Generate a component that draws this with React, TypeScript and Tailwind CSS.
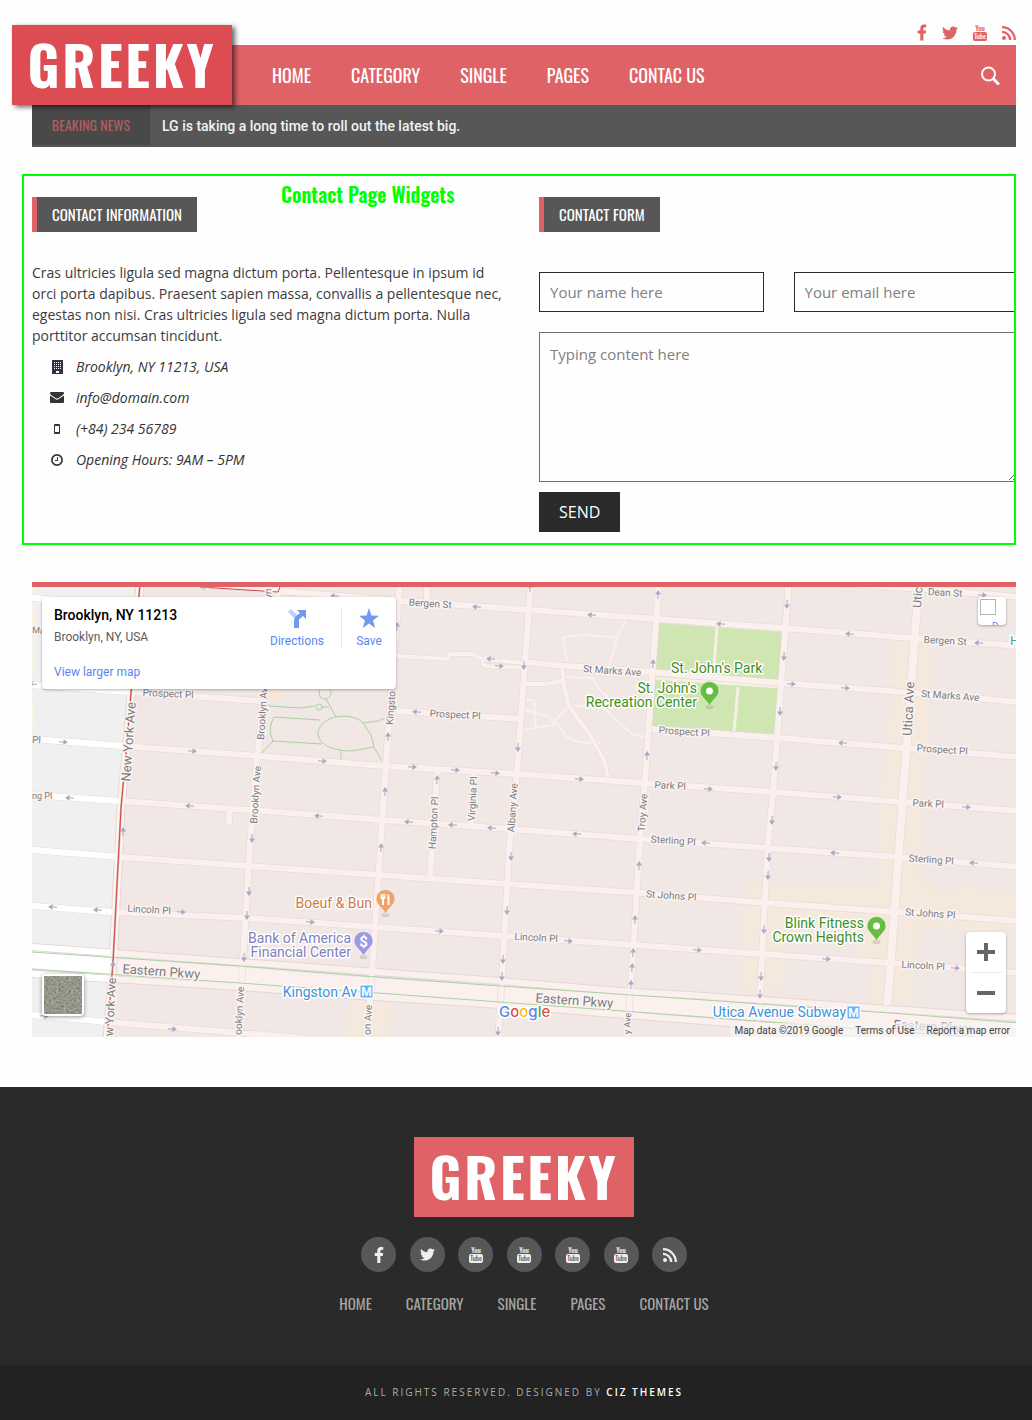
import React from 'react';
import { FaFacebookF, FaTwitter } from 'react-icons/fa';

const DISPLAY = "font-['Oswald','Liberation_Sans_Narrow',sans-serif]";

function YouTubeIcon({ knock }: { knock: string }) {
  return (
    <svg width="14" height="17" viewBox="0 0 14 17" aria-hidden="true">
      <text x="7" y="7" textAnchor="middle" fontSize="7" fontWeight="500" fontFamily="Oswald, sans-serif" fill="currentColor">You</text>
      <rect x="0" y="8" width="14" height="9" rx="2" fill="currentColor" />
      <text x="7" y="15" textAnchor="middle" fontSize="7" fontFamily="Oswald, sans-serif" fill={knock}>Tube</text>
    </svg>
  );
}

function RssIcon() {
  return (
    <svg width="14" height="14" viewBox="0 0 14 14" aria-hidden="true">
      <circle cx="2" cy="12" r="2" fill="currentColor" />
      <path d="M0 5.800A8.200 8.200 0 0 1 8.200 14M0 1.200A12.800 12.800 0 0 1 12.800 14" fill="none" stroke="currentColor" strokeWidth="2.300" />
    </svg>
  );
}

function BuildingIcon() {
  return (
    <svg width="11" height="14" viewBox="0 0 11 14" aria-hidden="true">
      <rect width="11" height="14" fill="#3b2c45" />
      {[2, 4, 6, 8].map((y) =>
        [2, 4, 6, 8].map((x) => <rect key={`${x}-${y}`} x={x} y={y} width="1" height="1" fill="#fff" />),
      )}
      <rect x="4" y="11" width="3" height="2" fill="#fff" />
    </svg>
  );
}

function EnvelopeIcon() {
  return (
    <svg width="14" height="11" viewBox="0 0 14 11" fill="#333" aria-hidden="true">
      <path d="M1 0H13Q14 0 14 1Q14 2.200 12.800 3L8.200 6.200Q7 7 5.800 6.200L1.200 3Q0 2.200 0 1Q0 0 1 0z" />
      <path d="M0 3.400L5.300 7.100Q7 8.200 8.700 7.100L14 3.400V10Q14 11 13 11H1Q0 11 0 10z" />
    </svg>
  );
}

function PhoneIcon() {
  return (
    <svg width="6" height="10" viewBox="0 0 6 10" aria-hidden="true">
      <rect width="6" height="10" rx="1" fill="#333" />
      <rect x="1" y="2" width="4" height="6" fill="#fefefe" />
    </svg>
  );
}

function ClockIcon() {
  return (
    <svg width="12" height="12" viewBox="0 0 12 12" fill="none" stroke="#333" aria-hidden="true">
      <circle cx="6" cy="6" r="5.100" strokeWidth="1.700" />
      <path d="M6.500 3V6.500H4" strokeWidth="1" />
    </svg>
  );
}

const NAV = ['HOME', 'CATEGORY', 'SINGLE', 'PAGES', 'CONTAC US'];
const FOOTER_NAV = ['HOME', 'CATEGORY', 'SINGLE', 'PAGES', 'CONTACT US'];

function Header() {
  return (
    <header className="ml-8 mr-4">
      <div className="flex h-[45px] items-center justify-end gap-[15px] pt-5 text-[#df6366]">
        <a href="#" aria-label="Facebook"><FaFacebookF className="h-[17px] w-[10px]" /></a>
        <a href="#" aria-label="Twitter"><FaTwitter size={16} /></a>
        <a href="#" aria-label="YouTube"><YouTubeIcon knock="#fefefe" /></a>
        <a href="#" aria-label="RSS"><RssIcon /></a>
      </div>
      <div className="relative flex h-[60px] items-center justify-between bg-[#df6366] pl-60 pr-4">
        <a href="#" className={`absolute -left-5 -top-5 z-10 flex h-20 w-[220px] items-center justify-center bg-[#dc4c52] pb-1 text-[55px] font-bold tracking-wider text-white shadow-[3px_2px_5px_rgba(0,0,0,0.6)] ${DISPLAY}`}>GREEKY</a>
        <nav className="flex gap-10">
          {NAV.map((n) => (
            <a key={n} href="#" className={`whitespace-nowrap text-[18px] font-normal text-white ${DISPLAY}`}>{n}</a>
          ))}
        </nav>
        <button type="button" aria-label="Search">
          <svg width="19" height="20" viewBox="0 0 19 20" fill="none" stroke="#fff" aria-hidden="true">
            <circle cx="7.500" cy="9" r="6.500" strokeWidth="2" />
            <path d="M12 13.500l6 6" strokeWidth="3" />
          </svg>
        </button>
      </div>
      <div className="flex h-[42px] bg-[#575757]">
        <div className={`flex h-10 w-[118px] items-center justify-center bg-[#494949] text-[14px] leading-10 text-[#b25c5f] ${DISPLAY}`}>BEAKING NEWS</div>
        <p className="ml-3 flex items-center font-['Roboto',sans-serif] text-[14px] font-medium text-[#f2f2f2]">LG is taking a long time to roll out the latest big.</p>
      </div>
    </header>
  );
}

function Tag({ children }: { children: React.ReactNode }) {
  return (
    <h2 className={`inline-flex h-[35px] items-center whitespace-nowrap border-l-[5px] border-[#df6366] bg-[#575757] px-[15px] text-[15px] font-normal text-white ${DISPLAY}`}>{children}</h2>
  );
}

const DETAILS = [
  { icon: <BuildingIcon />, text: 'Brooklyn, NY 11213, USA' },
  { icon: <EnvelopeIcon />, text: 'info@domain.com' },
  { icon: <PhoneIcon />, text: '(+84) 234 56789' },
  { icon: <ClockIcon />, text: 'Opening Hours: 9AM – 5PM' },
];

function Contact() {
  return (
    <section className="relative ml-[22px] mr-4 mt-[27px] h-[371px] overflow-hidden border-2 border-[#0f0] pl-2 pt-[21px] font-['Open_Sans',sans-serif]">
      <div className={`absolute left-[257px] top-1 text-[20px] font-semibold leading-7 text-[#0f0] ${DISPLAY}`}>Contact Page Widgets</div>
      <div className="-mr-1 grid grid-cols-2 gap-x-7">
        <div>
          <Tag>CONTACT INFORMATION</Tag>
          <p className="mt-[30px] text-[14px] leading-[21px] text-[#3c3c3c]">Cras ultricies ligula sed magna dictum porta. Pellentesque in ipsum id orci porta dapibus. Praesent sapien massa, convallis a pellentesque nec, egestas non nisi. Cras ultricies ligula sed magna dictum porta. Nulla porttitor accumsan tincidunt.</p>
          <ul className="mt-[5px]">
            {DETAILS.map((d) => (
              <li key={d.text} className="flex h-[31px] items-center pl-[18px] text-[14px] italic text-[#333]">
                <span className="mr-3 flex w-[14px] justify-center">{d.icon}</span>
                {d.text}
              </li>
            ))}
          </ul>
        </div>
        <form onSubmit={(e) => e.preventDefault()}>
          <Tag>CONTACT FORM</Tag>
          <div className="mt-10 grid grid-cols-2 gap-x-[30px]">
            <input aria-label="Your name" placeholder="Your name here" className="h-10 w-full border border-[#2a2a2a] px-[10px] text-[15px] placeholder:text-[#808080]" />
            <input aria-label="Your email" placeholder="Your email here" className="h-10 w-full border border-[#2a2a2a] px-[10px] text-[15px] placeholder:text-[#808080]" />
          </div>
          <textarea aria-label="Message" placeholder="Typing content here" className="mt-5 block h-[150px] w-full border border-[#707070] p-[10px] text-[15px] placeholder:text-[#808080]" />
          <button type="submit" className="mt-[10px] h-10 bg-[#2a2a2a] px-5 text-[16px] text-white">SEND</button>
        </form>
      </div>
    </section>
  );
}

const STREETS = [
  'M205 584L280 591L401 601L530 610L657 619L783 628L910 638L1020 646',
  'M427 580L427 603',
  'M820 582L923 589L1020 597',
  'M32 598L140 606',
  'M32 685L130 692L260 701',
  'M397 711L520 719',
  'M652 729L780 738L903 748L1020 757',
  'M523 662L567 666L650 672L780 683L903 692L1020 702',
  'M32 739L123 746L258 756L383 766L517 774L643 783L773 792L903 802L1020 811',
  'M32 795L120 801L250 810L383 820L510 829L640 839L767 848L897 857L1020 867',
  'M32 850L120 857L248 866L380 875L507 884L640 893L767 903L897 912L1020 921',
  'M32 906L113 912L247 918L375 927L503 936L633 945L763 954L890 963L1020 973',
  'M32 1015L107 1022L303 1038',
  'M280 580L265 688L257 758L250 845L243 958L238 1040',
  'M400 580L388 735L383 808L372 972L367 1040',
  'M531 580L517 772L510 838L502 978L498 1040',
  'M437 770L430 877',
  'M474 771L471 826',
  'M659 580L645 780L640 838L633 952L627 1040',
  'M789 580L773 792L768 842L760 995L757 1040',
  'M229 808L229 824',
];
const LANES = [
  'M397 656L448 659L450 654L472 654L482 659L523 663',
  'M487 657Q479 661 485 666L527 668',
  'M522 684H546L562 681',
  'M562 668L564 687L569 706L590 735L604 760L608 777',
];
const FOOTPATHS = [
  'M568 665L563 638Q575 634 600 636L617 638L626 619M617 638L609 666',
  'M563 677L593 678L600 690L608 697L602 705L569 706L555 721L567 737Q578 744 600 743',
  'M524 700H534L536 728M524 710L548 716L555 725L522 730M600 705L632 734L645 737',
];
const PARKWAY = 'M32 960L240 976L350 985L627 1003L890 1021L1020 1031';
const SERVICE = ['M32 947L113 953L350 970L500 981L633 992L690 995L890 1009L1020 1018', 'M32 974L240 987L360 996L500 1005L690 1020L890 1035L1020 1044'];
const MEDIANS = ['M32 952L240 966L350 975L500 986L690 999L890 1013L1020 1023', 'M32 969L240 983L350 991L500 1002L690 1016L890 1031L1020 1040'];
const NEW_YORK_AVE = 'M140 584L127 742L121 808L113 962L107 1040';

type Label = [string, number, number, number, number?, ('start' | 'middle' | 'end')?];
const LABELS: Label[] = [
  ['Bergen St', 430, 607, 4], ['St Marks Ave', 612, 674, 4], ['Prospect Pl', 455, 718, 3], ['Prospect Pl', 684, 735, 4],
  ['Prospect Pl', 168, 697, 3], ['Prospect Pl', 942, 753, 4], ['Park Pl', 670, 789, 3], ['Park Pl', 928, 807, 3],
  ['Sterling Pl', 673, 844, 4], ['Sterling Pl', 931, 863, 4], ['St Johns Pl', 671, 899, 4], ['St Johns Pl', 930, 917, 4],
  ['Lincoln Pl', 149, 913, 3], ['Lincoln Pl', 536, 941, 3], ['Lincoln Pl', 923, 969, 3], ['Dean St', 945, 596, 3],
  ['Bergen St', 945, 644, 3], ['St Marks Ave', 950, 699, 4], ['Ma', 32, 633, 3, 9, 'start'], ['Pl', 32, 743, 3, 10, 'start'],
  ['ng Pl', 32, 799, 0, 9, 'start'],
  ['Eastern Pkwy', 161, 976, 4, 13], ['Eastern Pkwy', 574, 1005, 4, 13],
  ['New York Ave', 133, 742, -86, 13], ['w York Ave', 116, 978, -87, 12, 'end'], ['Brooklyn Av', 264, 740, -86, 10, 'start'],
  ['Brooklyn Ave', 259, 795, -86], ['ooklyn Ave', 244, 987, -87, 10, 'end'], ['yn', 271, 599, -86, 10, 'start'],
  ['Kingsto', 393, 725, -86, 10, 'start'], ['on Ave', 372, 1005, -87, 10, 'end'], ['Hampton Pl', 437, 823, -87],
  ['Virginia Pl', 476, 799, -87], ['Albany Ave', 516, 808, -86], ['Troy Ave', 646, 813, -86], ['y Ave', 631, 1013, -87, 9, 'end'],
  ['Utica Ave', 913, 709, -87, 13], ['Utic', 921, 608, -86, 12, 'start'], ['Eastern Pkwy', 932, 1031, 3, 13],
];

/* Heading in degrees: 0 points right, 90 down, 180 left, 270 up. */
const ARROWS: [number, number, number][] = [
  [205, 587, 184], [335, 596, 184], [477, 607, 184], [592, 615, 184], [721, 624, 184], [850, 634, 184], [979, 643, 184], [982, 595, 4],
  [491, 659, 184], [499, 666, 4], [791, 684, 4], [845, 688, 4], [417, 712, 184], [843, 743, 184], [63, 742, 4], [192, 751, 4], [322, 761, 4],
  [412, 767, 4], [455, 770, 4], [495, 773, 4], [579, 779, 4], [708, 789, 4], [837, 797, 4], [966, 807, 4],
  [70, 798, 184], [190, 806, 184], [319, 816, 184], [409, 822, 184], [453, 825, 184], [492, 828, 184], [577, 834, 184], [706, 843, 184],
  [835, 853, 184], [974, 863, 184], [53, 907, 184], [98, 910, 184], [181, 912, 4], [310, 922, 4], [439, 931, 4], [568, 941, 4],
  [697, 950, 4], [826, 959, 4], [955, 968, 4], [172, 1029, 4], [44, 1016, 4], [33, 684, 184],
  [252, 838, 92], [249, 891, 92], [247, 915, 92], [244, 957, 92], [388, 737, 272], [385, 792, 272], [381, 848, 272], [397, 627, 272],
  [437, 780, 272], [524, 665, 92], [518, 747, 92], [511, 856, 92], [507, 910, 92], [503, 959, 92], [502, 976, 92], [498, 1031, 92],
  [658, 595, 272], [653, 664, 272], [647, 756, 272], [639, 866, 272], [635, 920, 272], [633, 953, 272], [632, 968, 272], [631, 985, 272],
  [787, 604, 92], [784, 656, 92], [780, 711, 92], [776, 766, 92], [772, 820, 92], [769, 857, 92], [768, 875, 92], [764, 929, 92],
  [761, 976, 92], [760, 994, 92], [123, 832, 272], [113, 966, 272], [530, 588, 272],
];

function Pin({ x, y, color, children }: { x: number; y: number; color: string; children: React.ReactNode }) {
  return (
    <g transform={`translate(${x} ${y})`}>
      <ellipse cx="0" cy="16" rx="4" ry="2" fill="#000" opacity="0.12" />
      <path d="M0 16C-1 10-9.500 6-9.500 0A9.500 9.500 0 0 1 9.500 0C9.500 6 1 10 0 16z" fill={color} stroke="#fff" strokeWidth="0.500" />
      {children}
    </g>
  );
}

function MapDrawing() {
  const halo = { stroke: '#fff', strokeWidth: 3, strokeLinejoin: 'round' as const, paintOrder: 'stroke' as const };
  return (
    <svg viewBox="32 587 984 450" preserveAspectRatio="xMidYMid slice" className="block h-full w-full font-['Roboto',sans-serif]" role="img" aria-label="Map of Brooklyn, NY 11213">
      <defs>
        <clipPath id="west"><path d="M32 587H140L127 742L121 808L113 962L107 1037H32z" /></clipPath>
        <filter id="foliage" x="0" y="0" width="100%" height="100%">
          <feTurbulence type="fractalNoise" baseFrequency="0.4 0.5" numOctaves="4" seed="7" />
          <feColorMatrix values="0.800 0.300 0 0 -0.060  0.800 0.300 0 0 -0.040  0.800 0.200 0 0 -0.060  0 0 0 0 1" />
        </filter>
      </defs>
      <rect x="32" y="587" width="984" height="450" fill="#f1e7e5" />
      <path d="M32 587H140L127 742L121 808L113 962L107 1037H32z" fill="#f0f0f0" />
      <path d="M32 587h4v12h-4zM32 612h3v16h-3zM32 645h2v22h-2zM32 703h2v24h-2z" fill="#fbf3dc" />
      <path d="M893 640L933 643L927 760H925L922 812L919 880L934 882L935 892L958 893L960 885L1016 893V925L988 932L960 930L920 926L912 1004H868L872 962L858 958L853 940L792 915L783 990H741L740 900L747 882L878 888L880 785L886 750z" fill="#f4e9dc" />
      <path d="M350 999L394 1003L386 1037H347z" fill="#f4e9dc" />
      <path d="M268 689L281 690L280 698L267 697z" fill="#fbe8d2" />
      <path d="M658 623L782 632L776 735L652 727z" fill="#cfe5b2" />
      <path d="M652 678L780 687M717 627L713 681M738 687L734 732" fill="none" stroke="#f6f0e4" strokeWidth="3" />

      <g fill="none" strokeLinejoin="round">
        <path d={FOOTPATHS.join('')} stroke="#fbf0ee" strokeWidth="2" />
        <path d="M267 704L270 706L300 708L315 706M322 707L329 707M326 699L336 717M262 753L273 741Q267 729 274 717L320 720M273 741L322 744M341 751V759M385 718L378 721L363 723L371 735L374 747L382 761M352 751L374 747" stroke="#a9d1a0" strokeWidth="1" />
        <path d="M336 717C346 715 358 717 363 723M336 717C322 720 318 728 318 734C319 745 334 751 352 751" stroke="#a9d1a0" strokeWidth="1" />
        <circle cx="325" cy="693" r="6" stroke="#a9d1a0" />
        <circle cx="319" cy="707" r="3" stroke="#a9d1a0" fill="#f1e7e5" />
        <path d={SERVICE.join('')} stroke="#e3d8d6" strokeWidth="8" />
        <path d={PARKWAY} stroke="#fbf0ee" strokeWidth="17" />
        <path d={LANES.join('')} stroke="#e6dbd9" strokeWidth="5" />
        <path d={STREETS.join('')} stroke="#e3d8d6" strokeWidth="7" />
        <path d="M919 580L902 808L890 972L887 1005" stroke="#e3d8d6" strokeWidth="9" />
        <path d={NEW_YORK_AVE} stroke="#e3d8d6" strokeWidth="9" />
        <path d={LANES.join('')} stroke="#fbf0ee" strokeWidth="4" />
        <path d={STREETS.join('')} stroke="#fbf0ee" strokeWidth="6" />
        <path d={SERVICE.join('')} stroke="#fbf0ee" strokeWidth="6" />
        <path d="M919 580L902 808L890 972L887 1005" stroke="#fbf0ee" strokeWidth="8" />
        <g clipPath="url(#west)">
          <path d={PARKWAY} stroke="#fff" strokeWidth="17" />
          <path d={STREETS.join('')} stroke="#fff" strokeWidth="6" />
          <path d={SERVICE.join('')} stroke="#fff" strokeWidth="6" />
        </g>
        <path d={NEW_YORK_AVE} stroke="#fdf5f4" strokeWidth="7" />
        <path d={MEDIANS.join('')} stroke="#a9d3a4" strokeWidth="1" />
        <path d={NEW_YORK_AVE} stroke="#eda9a4" strokeWidth="2" />
        <path d={NEW_YORK_AVE} stroke="#cf4a44" strokeWidth="1" />
        <path d="M200 587L278 592L280 587" stroke="#d0453f" strokeWidth="1" />
      </g>

      {ARROWS.map(([x, y, a]) => (
        <path key={`${x}-${y}`} transform={`translate(${x} ${y}) rotate(${a})`} d="M-4 0H2M1 -2L4 0L1 2z" fill="#aaa9c4" stroke="#aaa9c4" strokeWidth="1" />
      ))}

      {LABELS.map(([t, x, y, a, size = 10, anchor = 'middle']) => (
        <text key={`${x}-${y}`} transform={`translate(${x} ${y}) rotate(${a})`} textAnchor={anchor} fontSize={size} fill="#7a7d81" {...halo} stroke="#fbf3f1">{t}</text>
      ))}

      <g fontSize="14" fill="#3f8f1e" {...halo}>
        <text x="671" y="673">St. John's Park</text>
        <text x="697" y="693" textAnchor="end">St. John's</text>
        <text x="697" y="707" textAnchor="end">Recreation Center</text>
        <text x="864" y="928" textAnchor="end">Blink Fitness</text>
        <text x="864" y="942" textAnchor="end">Crown Heights</text>
      </g>
      <text x="372" y="908" textAnchor="end" fontSize="14" fill="#cf7a48" {...halo}>Boeuf &amp; Bun</text>
      <g fontSize="14" fill="#7f80bd" {...halo}>
        <text x="351" y="943" textAnchor="end">Bank of America</text>
        <text x="351" y="957" textAnchor="end">Financial Center</text>
      </g>
      <g fontSize="14" fill="#3f93d8" {...halo}>
        <text x="357" y="997" textAnchor="end">Kingston Av</text>
        <text x="846" y="1017" textAnchor="end">Utica Avenue Subway</text>
      </g>
      {[[360, 985], [847, 1006]].map(([x, y]) => (
        <g key={x}>
          <rect x={x} y={y} width="13" height="13" rx="1" fill="#5db5fa" stroke="#fff" />
          <text x={x + 6.5} y={y + 11} textAnchor="middle" fontSize="12" fontWeight="700" fill="#fff">M</text>
        </g>
      ))}
      <text x="1010" y="645" fontSize="13" fill="#4f9ca3" {...halo}>H</text>

      <Pin x={709.5} y={691} color="#66bd42"><circle r="3.500" fill="#fff" /></Pin>
      <Pin x={876.5} y={926} color="#66bd42"><circle r="3.500" fill="#fff" /></Pin>
      <Pin x={385.5} y={899} color="#f2a267">
        <path d="M-5 -5H0V-2Q0 0 -1.500 0.500V6H-3.500V0.500Q-5 0 -5 -2zM2 -5Q4.500 -4.500 4 1V6H2z" fill="#fff" />
        <path d="M-3.500 -5V-2M-1.500 -5V-2" stroke="#f2a267" strokeWidth="0.600" />
      </Pin>
      <Pin x={363.5} y={941} color="#9a99e3">
        <text y="5.500" textAnchor="middle" fontSize="15" fontWeight="700" fill="#fff">$</text>
      </Pin>
      <text x="499" y="1017" fontSize="15" fontWeight="500" fontFamily="Inter, sans-serif" {...halo}>
        <tspan fill="#5b86ec">G</tspan><tspan fill="#dd4f43">o</tspan><tspan fill="#f5bf18">o</tspan><tspan fill="#5b86ec">g</tspan><tspan fill="#3da659">l</tspan><tspan fill="#dd4f43">e</tspan>
      </text>
    </svg>
  );
}

function SatelliteThumb() {
  return (
    <button type="button" aria-label="Show satellite imagery" className="absolute bottom-[21px] left-[10px] h-[42px] w-[42px] rounded-sm border-2 border-white bg-[#84877a] shadow-[0_1px_4px_rgba(0,0,0,0.4)]">
      <svg viewBox="0 0 38 38" className="block h-full w-full [color-interpolation-filters:sRGB]" aria-hidden="true">
        <rect width="38" height="38" filter="url(#foliage)" />
        <rect width="38" height="38" fill="#4c5040" opacity="0.35" />
      </svg>
    </button>
  );
}

function MapPanel() {
  return (
    <section className="relative ml-8 mr-4 mt-[37px] h-[455px] overflow-hidden border-t-[5px] border-[#df6366] font-['Roboto',sans-serif]">
      <MapDrawing />
      <div className="absolute left-[10px] top-[10px] flex h-[92px] w-[354px] justify-between rounded-sm bg-white pl-3 shadow-[0_1px_3px_rgba(0,0,0,0.3)]">
        <div>
          <h3 className="mt-2 text-[14px] font-medium leading-5 text-black">Brooklyn, NY 11213</h3>
          <p className="mt-1 text-[12px] leading-4 text-[#5b5b5b]">Brooklyn, NY, USA</p>
          <a href="#" className="mt-[19px] block text-[12px] leading-4 text-[#5c86ec]">View larger map</a>
        </div>
        <div className="flex text-[12px] leading-4 text-[#5c86ec]">
          <a href="#" className="mt-[11px] flex w-[88px] flex-col items-center">
            <svg width="20" height="20" viewBox="0 0 20 20" aria-hidden="true" className="mb-[5px] shrink-0">
              <path d="M1 4L4 1L10 7L8 11z" fill="#bcd0f8" />
              <path d="M7 20V13Q7 10 9 8L13 5L10 2H19V11L16 8L12 11.500V20z" fill="#6f99ee" />
            </svg>
            Directions
          </a>
          <a href="#" className="mt-[11px] flex h-10 w-[55px] flex-col items-center border-l border-[#e8e8e8]">
            <svg width="20" height="20" viewBox="0 0 20 20" aria-hidden="true" className="mb-[5px] shrink-0">
              <path d="M10 0L12.500 7.500L20 7.700L14 12.400L16.200 20L10 15.500L3.800 20L6 12.400L0 7.700L7.500 7.500z" fill="#7398ee" />
            </svg>
            Save
          </a>
        </div>
      </div>
      <button type="button" aria-label="Toggle fullscreen" className="absolute right-[10px] top-[10px] h-7 w-7 overflow-hidden rounded-sm bg-white shadow-[0_1px_3px_rgba(0,0,0,0.3)]">
        <span className="absolute left-[2px] top-[2px] h-4 w-4 border border-[#b5b5b5]" />
        <span className="absolute left-[14px] top-6 text-[10px] leading-3 text-[#5c86ec]">D</span>
      </button>
      <SatelliteThumb />
      <div className="absolute bottom-6 right-[10px] flex h-[81px] w-10 flex-col rounded-sm bg-white px-[5px] shadow-[0_1px_3px_rgba(0,0,0,0.3)]">
        <button type="button" aria-label="Zoom in" className="flex flex-1 items-center justify-center border-b border-[#e6e6e6]">
          <svg width="18" height="18" viewBox="0 0 18 18" aria-hidden="true"><path d="M7 0h4v7h7v4h-7v7H7v-7H0V7h7z" fill="#666" /></svg>
        </button>
        <button type="button" aria-label="Zoom out" className="flex flex-1 items-center justify-center">
          <svg width="18" height="4" viewBox="0 0 18 4" aria-hidden="true"><path d="M0 0h18v4H0z" fill="#666" /></svg>
        </button>
      </div>
      <div className="absolute bottom-0 right-0 flex h-[14px] items-center gap-3 bg-[#f5f5f5]/70 pl-1 pr-[6px] text-[10px] text-[#444]">
        <span>Map data ©2019 Google</span>
        <a href="#">Terms of Use</a>
        <a href="#">Report a map error</a>
      </div>
    </section>
  );
}

function Footer() {
  const socials = [
    { name: 'Facebook', icon: <FaFacebookF className="h-4 w-[10px]" /> },
    { name: 'Twitter', icon: <FaTwitter size={15} /> },
    { name: 'YouTube', icon: <YouTubeIcon knock="#575757" /> },
    { name: 'YouTube', icon: <YouTubeIcon knock="#575757" /> },
    { name: 'YouTube', icon: <YouTubeIcon knock="#575757" /> },
    { name: 'YouTube', icon: <YouTubeIcon knock="#575757" /> },
    { name: 'RSS', icon: <RssIcon /> },
  ];
  return (
    <footer className="mt-[50px] bg-[#2a2a2a]">
      <div className="ml-8 mr-4 flex h-[278px] flex-col items-center pt-[50px]">
        <a href="#" className={`flex h-20 w-[220px] items-center justify-center bg-[#df6366] pb-1 text-[55px] font-bold tracking-wider text-white ${DISPLAY}`}>GREEKY</a>
        <div className="mt-5 flex w-[326px] justify-between">
          {socials.map((s, i) => (
            <a key={i} href="#" aria-label={s.name} className="flex h-[35px] w-[35px] items-center justify-center rounded-full bg-[#575757] text-[#eee]">{s.icon}</a>
          ))}
        </div>
        <nav className="mt-5 flex gap-[34px]">
          {FOOTER_NAV.map((n) => (
            <a key={n} href="#" className={`whitespace-nowrap text-[15px] leading-[22px] text-[#a5a5a5] ${DISPLAY}`}>{n}</a>
          ))}
        </nav>
      </div>
      <div className="bg-[#222]">
        <p className="ml-8 mr-4 flex h-[55px] items-center justify-center whitespace-pre font-['Open_Sans',sans-serif] text-[10px] tracking-[2px] text-[#aaa]">ALL RIGHTS RESERVED. DESIGNED BY <a href="#" className="font-semibold text-white">CIZ THEMES</a></p>
      </div>
    </footer>
  );
}

export default function App() {
  return (
    <div className="bg-[#fefefe]">
      <Header />
      <main>
        <Contact />
        <MapPanel />
      </main>
      <Footer />
    </div>
  );
}
